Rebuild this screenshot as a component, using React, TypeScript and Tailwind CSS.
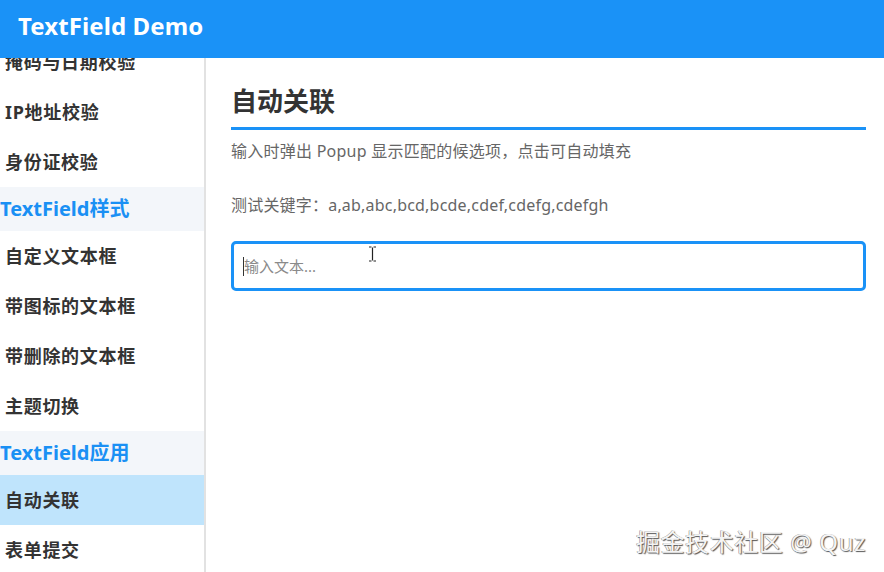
import React from "react";

const font = { fontFamily: '"Noto Sans", "Noto Sans CJK SC", sans-serif' };

type NavEntry = { label: string; group?: boolean; active?: boolean };

const nav: NavEntry[] = [
  { label: "掩码与日期校验" },
  { label: "IP地址校验" },
  { label: "身份证校验" },
  { label: "TextField样式", group: true },
  { label: "自定义文本框" },
  { label: "带图标的文本框" },
  { label: "带删除的文本框" },
  { label: "主题切换" },
  { label: "TextField应用", group: true },
  { label: "自动关联", active: true },
  { label: "表单提交" },
];

function NavItem({ item }: { item: NavEntry }) {
  if (item.group) {
    return (
      <div className="h-[44px] flex items-center bg-[#f3f6fa] text-[#1a90f4] font-bold text-[20px] leading-none">
        {item.label}
      </div>
    );
  }
  return (
    <div
      className={
        "h-[50px] flex items-center pl-[5px] font-bold text-[18px] tracking-[0.7px] leading-none text-[#333] " +
        (item.active ? "bg-[#bfe4fc]" : "bg-white")
      }
    >
      {item.label}
    </div>
  );
}

export default function App() {
  return (
    <div className="w-[884px] h-[572px] flex flex-col bg-white overflow-hidden relative" style={font}>
      <header className="h-[58px] shrink-0 bg-[#1a92f7] flex items-center pl-[18px] pb-[6px] z-10">
        <span className="text-white font-bold text-[24px] leading-none tracking-[0.1px]">TextField Demo</span>
      </header>
      <div className="flex flex-1 min-h-0">
        <aside className="w-[206px] shrink-0 border-r-2 border-[#e2e2e2] overflow-hidden">
          <div className="-mt-[21px]">
            {nav.map((n) => (
              <NavItem key={n.label} item={n} />
            ))}
          </div>
        </aside>
        <main className="flex-1 pl-[25px] pr-[18px] pt-[26px]">
          <h1 className="text-[26px] font-bold text-[#333] leading-[34px]">自动关联</h1>
          <div className="h-[3px] bg-[#1a92f7] mt-[9px]" />
          <p className="mt-[10px] text-[16px] text-[#666] leading-[22px] tracking-[0.25px]">
            输入时弹出 Popup 显示匹配的候选项，点击可自动填充
          </p>
          <p className="mt-[32px] text-[16px] text-[#666] leading-[22px] tracking-[0.2px]">
            测试关键字：a,ab,abc,bcd,bcde,cdef,cdefg,cdefgh
          </p>
          <div className="mt-[25px] h-[50px] border-[3px] border-[#1a92f7] rounded-[5px] flex items-center pl-[9px] relative">
            <span className="w-px h-[19px] bg-[#333]" />
            <span className="text-[15px] text-[#8a8a8a] leading-none">输入文本...</span>
            <svg
              className="absolute left-[134px] top-[2px]"
              width="9"
              height="16"
              viewBox="0 0 9 16"
              fill="none"
              stroke="#222"
              strokeWidth="1.2"
            >
              <path d="M1 1h2.5M5.5 1H8M4.5 1.5v13M1 15h2.5M5.5 15H8" />
            </svg>
          </div>
        </main>
      </div>
      <div
        className="absolute right-[18px] bottom-[18px] text-[24px] leading-none text-[#f4f4f4] tracking-[0.6px]"
        style={{ textShadow: "1px 1px 1px #555, -0.5px -0.5px 0 #888" }}
      >
        掘金技术社区 @ Quz
      </div>
    </div>
  );
}
